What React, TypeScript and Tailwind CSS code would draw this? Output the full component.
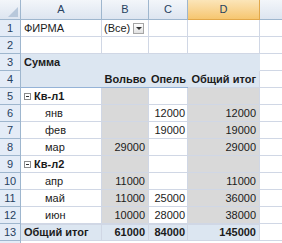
import React from "react";

type Row = {
  n: number;
  a: string;
  b?: string;
  c?: string;
  d?: string;
  kind: "plain" | "filter" | "head" | "colhead" | "group" | "item" | "total";
};

const rows: Row[] = [
  { n: 1, a: "ФИРМА", b: "(Все)", kind: "filter" },
  { n: 2, a: "", kind: "plain" },
  { n: 3, a: "Сумма", kind: "head" },
  { n: 4, a: "", b: "Вольво", c: "Опель", d: "Общий итог", kind: "colhead" },
  { n: 5, a: "Кв-л1", kind: "group" },
  { n: 6, a: "янв", c: "12000", d: "12000", kind: "item" },
  { n: 7, a: "фев", c: "19000", d: "19000", kind: "item" },
  { n: 8, a: "мар", b: "29000", d: "29000", kind: "item" },
  { n: 9, a: "Кв-л2", kind: "group" },
  { n: 10, a: "апр", b: "11000", d: "11000", kind: "item" },
  { n: 11, a: "май", b: "11000", c: "25000", d: "36000", kind: "item" },
  { n: 12, a: "июн", b: "10000", c: "28000", d: "38000", kind: "item" },
  { n: 13, a: "Общий итог", b: "61000", c: "84000", d: "145000", kind: "total" },
];

const MinusBox = () => (
  <span className="inline-flex items-center justify-center w-[7px] h-[7px] border border-[#8c8c8c] bg-white mr-[3px]">
    <span className="block w-[3px] h-px bg-[#333]" />
  </span>
);

const App = () => {
  return (
    <div
      className="w-[282px] h-[243px] overflow-hidden bg-white text-[11px] text-[#1b1b1b]"
      style={{ fontFamily: '"Liberation Sans", Arial, sans-serif' }}
    >
      <div className="grid grid-cols-[21px_81px_47px_39px_72px_22px] grid-rows-[20px_repeat(14,17px)]">
        {/* column headers */}
        <div className="bg-gradient-to-b from-[#f3f6fa] to-[#dde5f0] border-r border-b border-[#9eb6ce] relative">
          <span className="absolute right-[2px] bottom-[2px] w-0 h-0 border-l-[10px] border-l-transparent border-b-[10px] border-b-[#b8c8db]" />
        </div>
        {["A", "B", "C"].map((l) => (
          <div
            key={l}
            className="bg-gradient-to-b from-[#f3f6fa] to-[#dde5f0] border-r border-b border-[#9eb6ce] flex items-center justify-center text-[#27415f]"
          >
            {l}
          </div>
        ))}
        <div className="bg-gradient-to-b from-[#fbe5b8] to-[#f6c66f] border-r border-b border-[#e2a84a] flex items-center justify-center text-[#27415f]">
          D
        </div>
        <div className="bg-gradient-to-b from-[#f3f6fa] to-[#dde5f0] border-b border-[#9eb6ce]" />

        {rows.map((r) => {
          const pivotBlue = r.kind === "head" || r.kind === "colhead";
          const total = r.kind === "total";
          const body = r.kind === "group" || r.kind === "item";
          const bold = r.kind === "head" || r.kind === "colhead" || r.kind === "group" || total;
          const rowBg = pivotBlue || total ? "bg-[#dce6f1]" : "bg-white";
          const lineH =
            r.kind === "group"
              ? "border-b border-[#b8cce4]"
              : r.kind === "colhead"
              ? "border-b border-[#95b3d7]"
              : r.kind === "head"
              ? "border-b border-transparent"
              : "border-b border-[#d0d7e5]";
          const topLine = total ? "border-t border-[#95b3d7]" : "";
          const vline = pivotBlue ? "" : "border-r border-[#d0d7e5]";
          const grey = body ? "bg-[#d9d9d9]" : rowBg;
          return (
            <React.Fragment key={r.n}>
              <div className="bg-[#e4ecf7] border-r border-b border-[#9eb6ce] flex items-center justify-center text-[#27415f]">
                {r.n}
              </div>
              <div
                className={`${rowBg} ${lineH} ${topLine} ${vline} flex items-center ${bold ? "font-bold" : ""} ${
                  r.kind === "item" ? "pl-[24px]" : "pl-[3px]"
                }`}
              >
                {r.kind === "group" && <MinusBox />}
                {r.a}
              </div>
              <div
                className={`${grey} ${lineH} ${topLine} ${vline} flex items-center ${
                  r.kind === "filter" ? "justify-start pl-[2px]" : "justify-end pr-[3px]"
                } ${bold ? "font-bold" : ""}`}
              >
                {r.b}
                {r.kind === "filter" && (
                  <span className="ml-[3px] w-[11px] h-[11px] border border-[#a5a5a5] bg-gradient-to-b from-[#ffffff] to-[#e1e1e1] flex items-center justify-center">
                    <span className="w-0 h-0 border-l-[3px] border-r-[3px] border-t-[3px] border-l-transparent border-r-transparent border-t-[#333]" />
                  </span>
                )}
              </div>
              <div
                className={`${rowBg} ${lineH} ${topLine} ${vline} flex items-center justify-end pr-[2px] ${bold ? "font-bold" : ""}`}
              >
                {r.c}
              </div>
              <div
                className={`${grey} ${lineH} ${topLine} border-r border-[#d0d7e5] flex items-center justify-end pr-[3px] ${
                  bold ? "font-bold" : ""
                }`}
              >
                {r.d}
              </div>
              <div className="bg-white border-b border-[#d0d7e5]" />
            </React.Fragment>
          );
        })}

        <div className="bg-[#e4ecf7] border-r border-[#9eb6ce]" />
        <div className="col-span-5 bg-white" />
      </div>
    </div>
  );
};

export default App;
